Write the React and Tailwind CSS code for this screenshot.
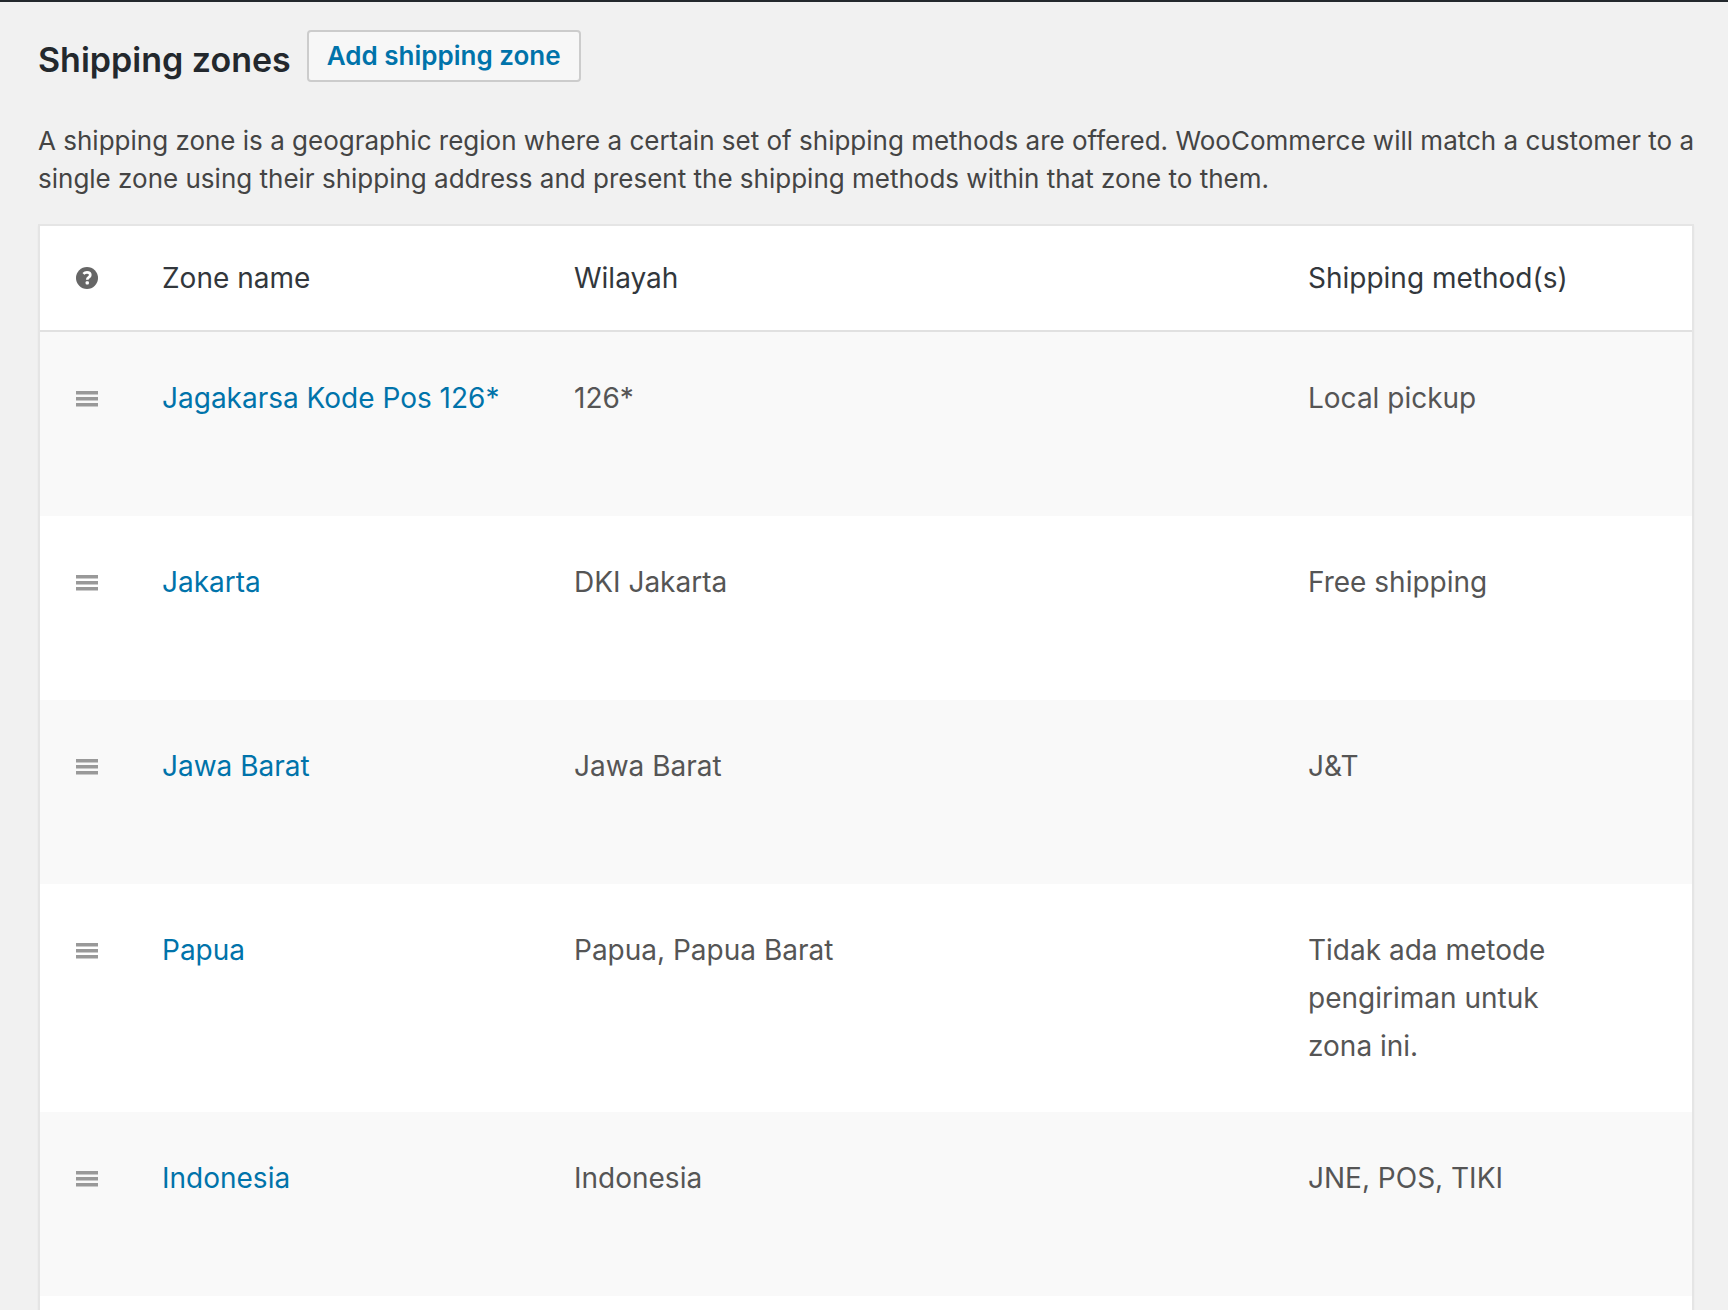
import React from 'react'

const zones = [
  { id: 1, name: 'Jagakarsa Kode Pos 126*', region: '126*', methods: 'Local pickup' },
  { id: 2, name: 'Jakarta', region: 'DKI Jakarta', methods: 'Free shipping' },
  { id: 3, name: 'Jawa Barat', region: 'Jawa Barat', methods: 'J&T' },
  { id: 4, name: 'Papua', region: 'Papua, Papua Barat', methods: 'Tidak ada metode pengiriman untuk zona ini.' },
  { id: 5, name: 'Indonesia', region: 'Indonesia', methods: 'JNE, POS, TIKI' },
]

const Icon = {
  Help: (props) => (
    <svg viewBox="0 0 22 22" width="22" height="22" {...props}>
      <circle cx="11" cy="11" r="11" fill="#666" />
      <path d="M7.4 6.9C8.4 5.9 9.6 5.4 11 5.4c2 0 3.3 1 3.3 2.6 0 1.2-.7 1.8-1.6 2.4-.9.6-1.4 1-1.4 2v.3" fill="none" stroke="#fff" strokeWidth="2.7" />
      <rect x="9.6" y="14.2" width="3.3" height="3.2" rx="1" fill="#fff" />
    </svg>
  ),
  Sort: (props) => (
    <svg viewBox="0 0 22 16" width="22" height="16" fill="#999" {...props}>
      <path d="M0 0h22v3H0zM0 6h22v3H0zM0 12h22v3H0z" />
      <path d="M0 3h22v1H0zM0 9h22v1H0zM0 15h22v1H0z" opacity="0.5" />
    </svg>
  ),
}

export default function ShippingZones() {
  return (
    <div className="h-screen overflow-hidden border-t-2 border-[#23282d] bg-[#f1f1f1] pl-[38px] pr-[34px] pt-7 font-[Inter,sans-serif] text-[#444]">
      <div className="flex items-center gap-4">
        <h2 className="pt-2 text-[34px] leading-[44px] font-semibold text-[#23282d]">Shipping zones</h2>
        <a href="#add" className="rounded-[4px] border-2 border-[#ccc] bg-[#f7f7f7] px-[18px] text-[26px] leading-[48px] font-semibold text-[#0073aa]">
          Add shipping zone
        </a>
      </div>

      <p className="-mr-4 mt-10 text-[26px] leading-[38px]">
        A shipping zone is a geographic region where a certain set of shipping methods are offered. WooCommerce will match a customer to a single zone using their shipping address and present the shipping methods within that zone to them.
      </p>

      <div className="mt-[26px] border-2 border-[#e5e5e5] bg-white shadow-[0_2px_2px_rgba(0,0,0,0.04)]">
        <table className="w-full table-fixed border-separate border-spacing-0 text-left text-[28px] leading-[48px]">
          <thead>
            <tr className="text-[#32373c]">
              <th className="w-[122px] border-b-2 border-[#e1e1e1] py-7 pl-9 font-normal" aria-label="Sort">
                <Icon.Help />
              </th>
              <th className="w-[412px] border-b-2 border-[#e1e1e1] py-7 font-normal">Zone name</th>
              <th className="border-b-2 border-[#e1e1e1] py-7 font-normal">Wilayah</th>
              <th className="w-[384px] border-b-2 border-[#e1e1e1] py-7 font-normal">Shipping method(s)</th>
            </tr>
          </thead>
          <tbody className="text-[#555]">
            {zones.map(z => (
              <tr key={z.id} className="align-top odd:bg-[#f9f9f9]">
                <td className="h-[184px] py-[42px] pl-9">
                  <Icon.Sort className="my-[17px]" />
                </td>
                <td className="py-[42px]">
                  <a href="#zone" className="text-[#0073aa]">{z.name}</a>
                </td>
                <td className="py-[42px]">{z.region}</td>
                <td className="py-[42px] pr-[112px]">{z.methods}</td>
              </tr>
            ))}
          </tbody>
        </table>
        <div className="h-[184px]" />
      </div>
    </div>
  )
}
